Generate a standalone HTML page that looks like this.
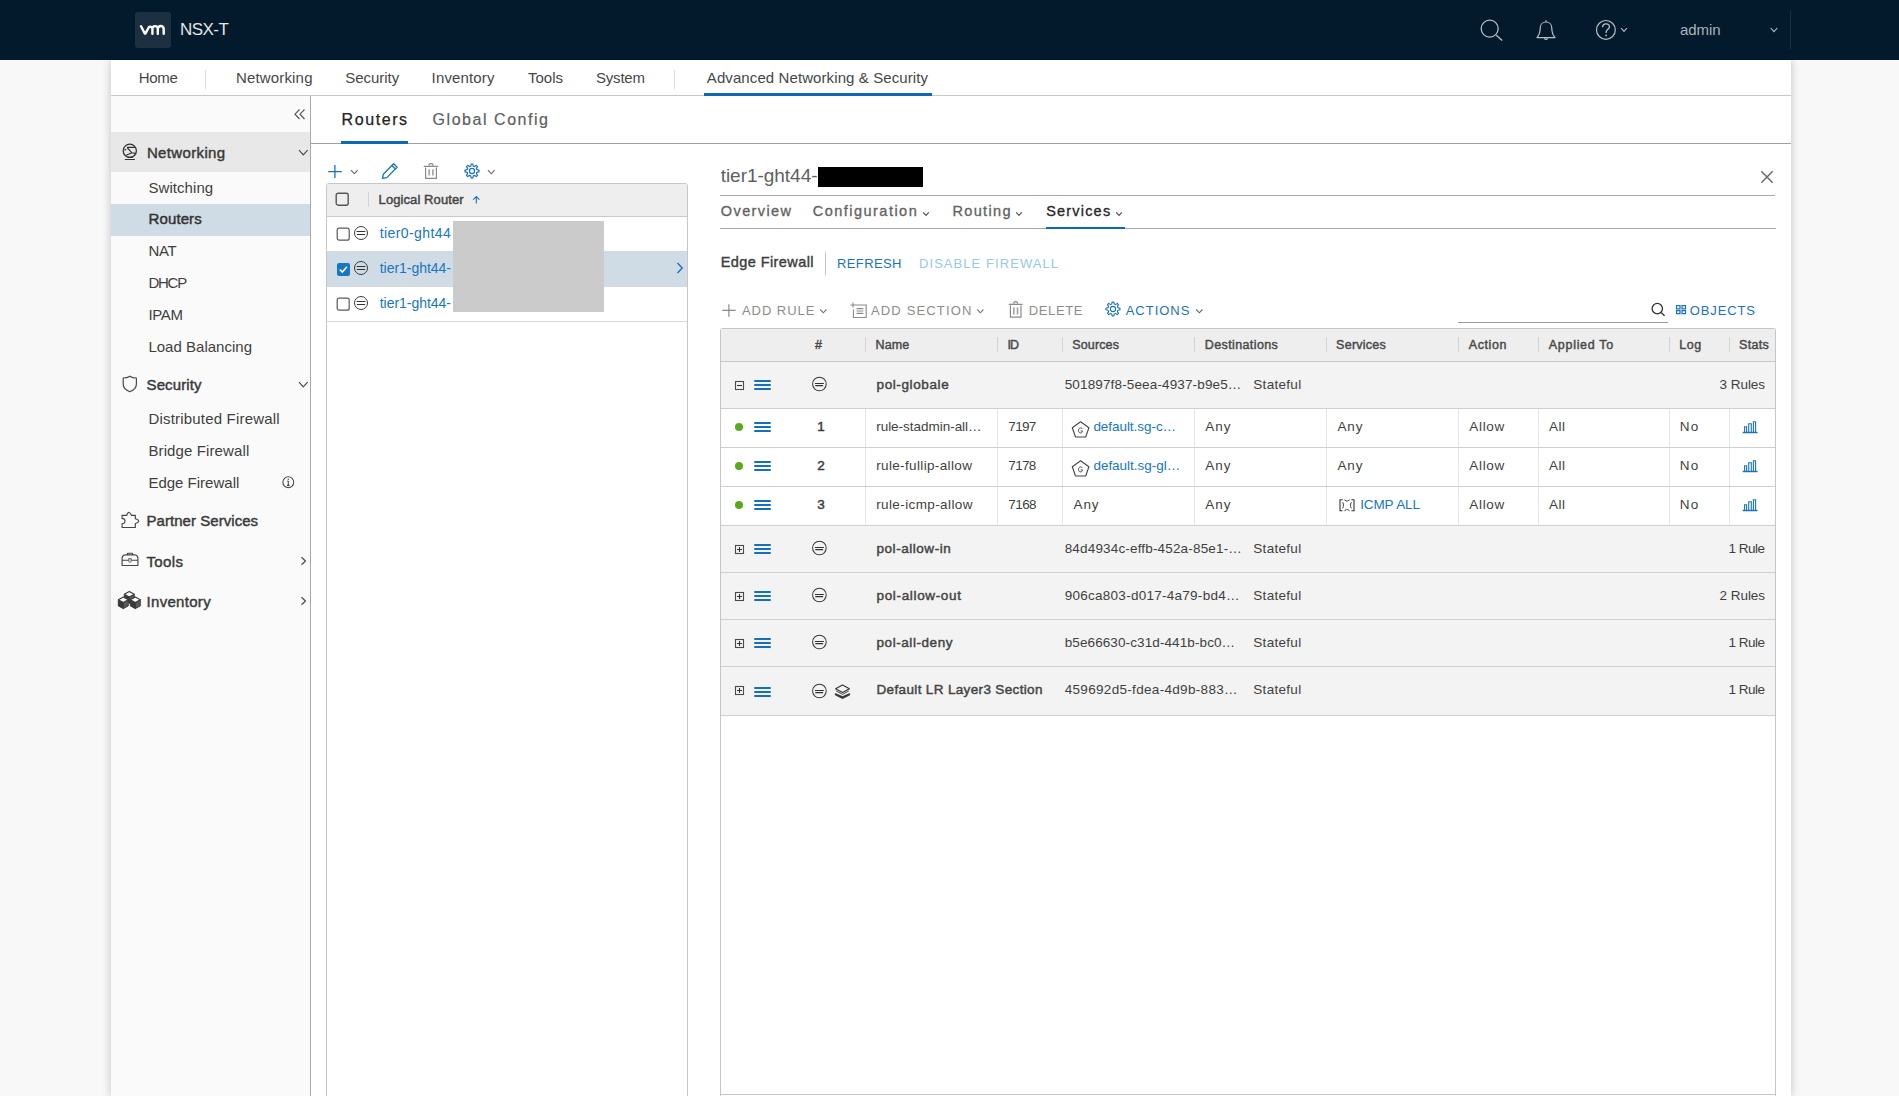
<!DOCTYPE html>
<html><head><meta charset="utf-8"><title>NSX-T</title>
<style>
html,body{margin:0;padding:0;width:1899px;height:1096px;overflow:hidden;background:#f8f8f8;font-family:"Liberation Sans",sans-serif;}
.t{position:absolute;white-space:nowrap;}
svg{overflow:visible;}
</style></head><body>
<div style="position:absolute;left:0px;top:60px;width:1899px;height:1036px;background:#f8f8f8;"></div>
<div style="position:absolute;left:111px;top:60px;width:1680px;height:1036px;background:#fff;box-shadow:0 0 9px rgba(0,0,0,0.22);"></div>
<div style="position:absolute;left:0px;top:0px;width:1899px;height:60px;background:#021a2b;"></div>
<div style="position:absolute;left:135px;top:12px;width:36px;height:36px;background:#1d3041;border-radius:3px;"></div>
<svg style="position:absolute;left:135px;top:12px;" width="36" height="36" viewBox="0 0 36 36" fill="none"><path d="M6 14.3 L9.7 21.3 Q10.1 22 10.5 21.3 L13.7 15.5 A2.1 2.1 0 0 1 17.4 16.6 V21.8 M17.4 16.8 A2.7 2.7 0 0 1 22.8 16.8 V21.8 M22.8 16.9 A2.95 2.95 0 0 1 28.7 16.9 V21.8" stroke="#fff" stroke-width="2.4" stroke-linecap="round" stroke-linejoin="round"/></svg>
<div class="t" style="left:179.90px;top:20.90px;font-size:17px;line-height:17px;font-weight:400;color:#e6e6e6;letter-spacing:-0.525px;">NSX-T</div>
<svg style="position:absolute;left:1478px;top:17px;" width="28" height="28" viewBox="0 0 28 28" fill="none"><circle cx="11.7" cy="11.6" r="8.5" stroke="#b9bfc5" stroke-width="1.3"/><line x1="18.2" y1="18.3" x2="24.2" y2="23.6" stroke="#b9bfc5" stroke-width="1.4"/></svg>
<svg style="position:absolute;left:1534px;top:17px;" width="24" height="26" viewBox="0 0 24 26" fill="none"><path d="M12 3.3 V4.8 M5 17.5 C5.6 16 6.3 14 6.3 10.6 C6.3 7.3 8.8 5 12 5 C15.2 5 17.7 7.3 17.7 10.6 C17.7 14 18.4 16 19 17.5 L21 20.6 H3 Z" stroke="#b9bfc5" stroke-width="1.2" stroke-linejoin="round"/><path d="M10.3 21.3 Q12 23.5 13.7 21.3" stroke="#b9bfc5" stroke-width="1.2"/></svg>
<svg style="position:absolute;left:1594px;top:18px;" width="36" height="24" viewBox="0 0 36 24" fill="none"><circle cx="11.9" cy="11.9" r="9.4" stroke="#b9bfc5" stroke-width="1.2"/><path d="M8.6 9.2 C8.6 7 10.1 5.9 12 5.9 C14 5.9 15.4 7.1 15.4 8.9 C15.4 11.2 12.1 11.4 12.1 14.2 V15" stroke="#b9bfc5" stroke-width="1.3"/><rect x="11.3" y="16.6" width="1.6" height="1.6" fill="#b9bfc5"/><path d="M27 10 L30 13.4 L33 10" stroke="#b9bfc5" stroke-width="1.1"/></svg>
<div class="t" style="left:1680.00px;top:21.70px;font-size:15px;line-height:15px;font-weight:400;color:#adb3b9;letter-spacing:-0.088px;">admin</div>
<svg style="position:absolute;left:1766px;top:24px;" width="16" height="12" viewBox="0 0 16 12" fill="none"><path d="M4.7 4 L8 7.6 L11.3 4" stroke="#b9bfc5" stroke-width="1.1"/></svg>
<div style="position:absolute;left:1790px;top:10px;width:1px;height:39px;background:#1e3040;"></div>
<div style="position:absolute;left:111px;top:95px;width:1680px;height:1px;background:#c8c8c8;"></div>
<div class="t" style="left:138.70px;top:70.20px;font-size:15px;line-height:15px;font-weight:400;color:#474747;letter-spacing:-0.267px;">Home</div>
<div class="t" style="left:235.90px;top:70.20px;font-size:15px;line-height:15px;font-weight:400;color:#474747;letter-spacing:0.172px;">Networking</div>
<div class="t" style="left:345.20px;top:70.20px;font-size:15px;line-height:15px;font-weight:400;color:#474747;letter-spacing:-0.014px;">Security</div>
<div class="t" style="left:431.60px;top:70.20px;font-size:15px;line-height:15px;font-weight:400;color:#474747;letter-spacing:0.150px;">Inventory</div>
<div class="t" style="left:528.00px;top:70.20px;font-size:15px;line-height:15px;font-weight:400;color:#474747;letter-spacing:0.000px;">Tools</div>
<div class="t" style="left:596.00px;top:70.20px;font-size:15px;line-height:15px;font-weight:400;color:#474747;letter-spacing:-0.200px;">System</div>
<div class="t" style="left:706.80px;top:70.20px;font-size:15px;line-height:15px;font-weight:400;color:#474747;letter-spacing:0.095px;">Advanced Networking &amp; Security</div>
<div style="position:absolute;left:205px;top:70px;width:1px;height:19px;background:#dddddd;"></div>
<div style="position:absolute;left:674px;top:70px;width:1px;height:19px;background:#dddddd;"></div>
<div style="position:absolute;left:704px;top:93px;width:228px;height:3px;background:#0e68b5;"></div>
<div style="position:absolute;left:111px;top:96px;width:199px;height:1000px;background:#fafafa;"></div>
<div style="position:absolute;left:310px;top:96px;width:1px;height:1000px;background:#a9a9a9;"></div>
<svg style="position:absolute;left:292px;top:107px;" width="16" height="15" viewBox="0 0 16 15" fill="none"><path d="M7.5 2.5 L3 7.2 L7.5 12 M12.5 2.5 L8 7.2 L12.5 12" stroke="#565656" stroke-width="1.2"/></svg>
<div style="position:absolute;left:111px;top:132px;width:199px;height:40px;background:#e8e8e8;"></div>
<div style="position:absolute;left:111px;top:204px;width:199px;height:32px;background:#d0dce5;"></div>
<div class="t" style="left:146.92px;top:145.30px;font-size:15px;line-height:15px;font-weight:400;color:#3a3a3a;letter-spacing:0.356px;-webkit-text-stroke:0.45px #3a3a3a;">Networking</div>
<div class="t" style="left:148.40px;top:179.50px;font-size:15px;line-height:15px;font-weight:400;color:#3f3f3f;letter-spacing:0.075px;">Switching</div>
<div class="t" style="left:148.62px;top:211.00px;font-size:15px;line-height:15px;font-weight:400;color:#333;letter-spacing:0.092px;-webkit-text-stroke:0.45px #333;">Routers</div>
<div class="t" style="left:148.40px;top:242.90px;font-size:15px;line-height:15px;font-weight:400;color:#3f3f3f;letter-spacing:-0.300px;">NAT</div>
<div class="t" style="left:148.40px;top:274.80px;font-size:15px;line-height:15px;font-weight:400;color:#3f3f3f;letter-spacing:-1.233px;">DHCP</div>
<div class="t" style="left:148.40px;top:306.80px;font-size:15px;line-height:15px;font-weight:400;color:#3f3f3f;letter-spacing:-0.317px;">IPAM</div>
<div class="t" style="left:148.40px;top:339.00px;font-size:15px;line-height:15px;font-weight:400;color:#3f3f3f;letter-spacing:0.015px;">Load Balancing</div>
<div class="t" style="left:146.53px;top:377.40px;font-size:15px;line-height:15px;font-weight:400;color:#3a3a3a;letter-spacing:0.121px;-webkit-text-stroke:0.45px #3a3a3a;">Security</div>
<div class="t" style="left:148.40px;top:411.00px;font-size:15px;line-height:15px;font-weight:400;color:#3f3f3f;letter-spacing:0.197px;">Distributed Firewall</div>
<div class="t" style="left:148.40px;top:443.00px;font-size:15px;line-height:15px;font-weight:400;color:#3f3f3f;letter-spacing:0.121px;">Bridge Firewall</div>
<div class="t" style="left:148.40px;top:475.40px;font-size:15px;line-height:15px;font-weight:400;color:#3f3f3f;letter-spacing:0.004px;">Edge Firewall</div>
<div class="t" style="left:146.53px;top:513.10px;font-size:15px;line-height:15px;font-weight:400;color:#3a3a3a;letter-spacing:0.047px;-webkit-text-stroke:0.45px #3a3a3a;">Partner Services</div>
<div class="t" style="left:146.53px;top:553.50px;font-size:15px;line-height:15px;font-weight:400;color:#3a3a3a;letter-spacing:0.337px;-webkit-text-stroke:0.45px #3a3a3a;">Tools</div>
<div class="t" style="left:146.53px;top:593.80px;font-size:15px;line-height:15px;font-weight:400;color:#3a3a3a;letter-spacing:0.306px;-webkit-text-stroke:0.45px #3a3a3a;">Inventory</div>
<svg style="position:absolute;left:298px;top:148.5px;" width="11" height="8" viewBox="0 0 11 8" fill="none"><path d="M1 1.2 L5.3 5.8 L9.6 1.2" stroke="#4a4a4a" stroke-width="1.2"/></svg>
<svg style="position:absolute;left:298px;top:380.5px;" width="11" height="8" viewBox="0 0 11 8" fill="none"><path d="M1 1.2 L5.3 5.8 L9.6 1.2" stroke="#4a4a4a" stroke-width="1.2"/></svg>
<svg style="position:absolute;left:299.5px;top:555.5px;" width="8" height="11" viewBox="0 0 8 11" fill="none"><path d="M1.5 1.2 L5.5 5 L1.5 8.8" stroke="#4a4a4a" stroke-width="1.2"/></svg>
<svg style="position:absolute;left:299.5px;top:595.5px;" width="8" height="11" viewBox="0 0 8 11" fill="none"><path d="M1.5 1.2 L5.5 5 L1.5 8.8" stroke="#4a4a4a" stroke-width="1.2"/></svg>
<svg style="position:absolute;left:121px;top:143px;" width="18" height="18" viewBox="0 0 18 18" fill="none"><circle cx="8.8" cy="7.8" r="6.6" stroke="#333" stroke-width="1.3"/><path d="M6 4.4 H14 M6.1 4.5 L10.9 9.8 L14.5 10.4 M10.9 9.8 L5 12.2 M6.6 14.3 H11.8 M3.8 16.5 H13.9 M3.4 7.2 L5.2 6.4" stroke="#333" stroke-width="1.2"/></svg>
<svg style="position:absolute;left:121px;top:375px;" width="18" height="18" viewBox="0 0 18 18" fill="none"><path d="M8.8 1.2 C6.5 2.8 4.2 3 2.2 3 V9 C2.2 12.6 5 15.3 8.8 16.8 C12.6 15.3 15.4 12.6 15.4 9 V3 C13.4 3 11.1 2.8 8.8 1.2 Z" stroke="#4a4a4a" stroke-width="1.2" stroke-linejoin="round"/></svg>
<svg style="position:absolute;left:120px;top:512px;" width="20" height="18" viewBox="0 0 20 18" fill="none"><path d="M2.1 3.3 H6.8 Q7.2 0.9 8.8 0.3 Q10.6 0.8 11.4 3.3 H15.3 V6.8 Q18.4 7.4 18.8 9.2 Q18.3 11 15.3 11.5 V15.5 H2.1 V11.5 H3.4 Q5 11 5 9.1 Q5 7.1 3.4 6.6 H2.1 Z" stroke="#444" stroke-width="1.15" stroke-linejoin="round"/></svg>
<svg style="position:absolute;left:120px;top:551px;" width="20" height="16" viewBox="0 0 20 16" fill="none"><path d="M2.1 14.5 V7.3 Q2.1 4.4 5.2 3.8 H14.8 Q17.9 4.4 17.9 7.3 V14.5 Z M7.4 3.7 V2.8 Q7.4 2.2 8 2.2 H12 Q12.6 2.2 12.6 2.8 V3.7 M2.1 9.2 H8.6 M11.4 9.2 H17.9" stroke="#444" stroke-width="1.15" stroke-linejoin="round"/><path d="M8.7 7.6 H11.3 V10.2 L10 11.6 L8.7 10.2 Z" stroke="#555" stroke-width="0.9" fill="#ddd"/></svg>
<svg style="position:absolute;left:117px;top:590px;" width="25" height="20" viewBox="0 0 25 20" fill="none"><path d="M7.332 4.300000000000001 L12.3 7.0 L12.3 13.2 L7.332 10.5 Z" fill="#3a3a3a" stroke="#3a3a3a" stroke-width="1" stroke-linejoin="round"/><path d="M12.3 7.0 L17.268 4.300000000000001 L17.268 10.5 L12.3 13.2 Z" fill="#5a5a5a" stroke="#3a3a3a" stroke-width="1" stroke-linejoin="round"/><path d="M12.3 1.6 L17.268 4.300000000000001 L12.3 7.0 L7.332 4.300000000000001 Z" fill="#fafafa" stroke="#3a3a3a" stroke-width="1.1" stroke-linejoin="round"/><path d="M1.331999999999999 9.7 L6.3 12.4 L6.3 18.6 L1.331999999999999 15.899999999999999 Z" fill="#3a3a3a" stroke="#3a3a3a" stroke-width="1" stroke-linejoin="round"/><path d="M6.3 12.4 L11.268 9.7 L11.268 15.899999999999999 L6.3 18.6 Z" fill="#5a5a5a" stroke="#3a3a3a" stroke-width="1" stroke-linejoin="round"/><path d="M6.3 7 L11.268 9.7 L6.3 12.4 L1.331999999999999 9.7 Z" fill="#fafafa" stroke="#3a3a3a" stroke-width="1.1" stroke-linejoin="round"/><path d="M13.332 9.7 L18.3 12.4 L18.3 18.6 L13.332 15.899999999999999 Z" fill="#3a3a3a" stroke="#3a3a3a" stroke-width="1" stroke-linejoin="round"/><path d="M18.3 12.4 L23.268 9.7 L23.268 15.899999999999999 L18.3 18.6 Z" fill="#5a5a5a" stroke="#3a3a3a" stroke-width="1" stroke-linejoin="round"/><path d="M18.3 7 L23.268 9.7 L18.3 12.4 L13.332 9.7 Z" fill="#fafafa" stroke="#3a3a3a" stroke-width="1.1" stroke-linejoin="round"/></svg>
<svg style="position:absolute;left:281.6px;top:476.2px;" width="13" height="13" viewBox="0 0 13 13" fill="none"><circle cx="6.3" cy="6.2" r="5.4" stroke="#4a4a4a" stroke-width="1.1"/><path d="M6.3 5 V9.4 M5 9.4 H7.6 M5.2 5 H6.3" stroke="#4a4a4a" stroke-width="1.1"/><rect x="5.7" y="2.7" width="1.2" height="1.2" fill="#4a4a4a"/></svg>
<div class="t" style="left:341.62px;top:111.50px;font-size:16px;line-height:16px;font-weight:400;color:#222;letter-spacing:1.575px;-webkit-text-stroke:0.25px #222;">Routers</div>
<div class="t" style="left:432.60px;top:111.50px;font-size:16px;line-height:16px;font-weight:400;color:#5e5e5e;letter-spacing:1.538px;-webkit-text-stroke:0.2px #5e5e5e;">Global Config</div>
<div style="position:absolute;left:311px;top:143px;width:1480px;height:1px;background:#a0a0a0;"></div>
<div style="position:absolute;left:341px;top:141px;width:67px;height:3px;background:#0e68b5;"></div>
<svg style="position:absolute;left:326px;top:163px;" width="18" height="18" viewBox="0 0 18 18" fill="none"><path d="M8.9 2 V15 M2.2 8.6 H15.8" stroke="#1a73ba" stroke-width="1.3"/></svg>
<svg style="position:absolute;left:349px;top:168px;" width="11" height="9" viewBox="0 0 11 9" fill="none"><path d="M2 2.2 L5.3 5.8 L8.6 2.2" stroke="#666" stroke-width="1.1"/></svg>
<svg style="position:absolute;left:380px;top:161px;" width="20" height="20" viewBox="0 0 20 20" fill="none"><path d="M2.5 17.4 L3.3 13.2 L13.6 2.8 L17.1 6.3 L6.8 16.6 Z M11.9 4.5 L15.4 8" stroke="#1a73ba" stroke-width="1.3" stroke-linejoin="round"/></svg>
<svg style="position:absolute;left:423px;top:162px;" width="16" height="18" viewBox="0 0 16 18" fill="none"><path d="M0.8 4.3 H15.2 M6 3.4 Q6 1.6 8 1.6 Q10 1.6 10 3.4 M2.6 5.6 V16.4 H13.4 V5.6" stroke="#8a8a8a" stroke-width="1.2"/><path d="M6.1 7.2 V13.6 M9.9 7.2 V13.6" stroke="#9a9a9a" stroke-width="1.5"/></svg>
<svg style="position:absolute;left:462.5px;top:163px;" width="18" height="17" viewBox="0 0 18 17" fill="none"><path d="M8.2 1 L9.8 1 L10.3 3.1 L11.5 3.6 L13.3 2.4 L14.5 3.6 L13.4 5.4 L13.9 6.6 L16 7.2 L16 8.8 L13.9 9.3 L13.4 10.6 L14.5 12.4 L13.3 13.6 L11.5 12.4 L10.3 12.9 L9.8 15 L8.2 15 L7.7 12.9 L6.5 12.4 L4.7 13.6 L3.5 12.4 L4.6 10.6 L4.1 9.3 L2 8.8 L2 7.2 L4.1 6.6 L4.6 5.4 L3.5 3.6 L4.7 2.4 L6.5 3.6 L7.7 3.1 Z" stroke="#1a73ba" stroke-width="1.2" stroke-linejoin="round"/><circle cx="9" cy="8" r="2.6" stroke="#1a73ba" stroke-width="1.2"/></svg>
<svg style="position:absolute;left:486px;top:168px;" width="11" height="9" viewBox="0 0 11 9" fill="none"><path d="M2 2.2 L5.3 5.8 L8.6 2.2" stroke="#666" stroke-width="1.1"/></svg>
<div style="position:absolute;left:326px;top:183px;width:362px;height:1000px;border:1px solid #c6c6c6;border-radius:3px;background:#fff;box-sizing:border-box;"></div>
<div style="position:absolute;left:327px;top:184px;width:360px;height:32px;background:#eeeeee;border-radius:2px 2px 0 0;"></div>
<div style="position:absolute;left:327px;top:216px;width:360px;height:1px;background:#c9c9c9;"></div>
<div style="position:absolute;left:327px;top:251px;width:360px;height:1px;background:#d8d8d8;"></div>
<div style="position:absolute;left:327px;top:252px;width:360px;height:34px;background:#d0dce5;"></div>
<div style="position:absolute;left:327px;top:286px;width:360px;height:1px;background:#d8d8d8;"></div>
<div style="position:absolute;left:327px;top:321px;width:360px;height:1px;background:#d8d8d8;"></div>
<svg style="position:absolute;left:335px;top:192px;" width="15" height="15" viewBox="0 0 15 15" fill="none"><rect x="1.2" y="1.2" width="12" height="12" rx="2" stroke="#565656" stroke-width="1.4"/></svg>
<div style="position:absolute;left:368px;top:192px;width:1px;height:15px;background:#d4d4d4;"></div>
<div class="t" style="left:378.62px;top:193.40px;font-size:13px;line-height:13px;font-weight:400;color:#454545;letter-spacing:0.085px;-webkit-text-stroke:0.45px #454545;">Logical Router</div>
<svg style="position:absolute;left:471px;top:195px;" width="11" height="10" viewBox="0 0 11 10" fill="none"><path d="M5.3 8.6 V1.6 M2.2 4.6 L5.3 1.5 L8.4 4.6" stroke="#1a73ba" stroke-width="1.1"/></svg>
<svg style="position:absolute;left:336px;top:227px;" width="15" height="15" viewBox="0 0 15 15" fill="none"><rect x="1.2" y="1.2" width="12" height="12" rx="2" stroke="#5a5a5a" stroke-width="1.2" fill="#fff"/></svg>
<svg style="position:absolute;left:354px;top:226px;" width="15" height="15" viewBox="0 0 15 15" fill="none"><circle cx="7" cy="7" r="6.5" stroke="#3a3a3a" stroke-width="1"/><path d="M2.6 5.5 H11.4 M2.9 8.5 H11.1" stroke="#333" stroke-width="1.1"/></svg>
<div class="t" style="left:379.70px;top:225.90px;font-size:14px;line-height:14px;font-weight:400;color:#1676bf;letter-spacing:0.415px;">tier0-ght44</div>
<svg style="position:absolute;left:336px;top:262px;" width="15" height="15" viewBox="0 0 15 15" fill="none"><rect x="1" y="1" width="13" height="13" rx="2" fill="#1676c6"/><path d="M3.8 7.5 L6.3 10 L11 4.8" stroke="#fff" stroke-width="1.6"/></svg>
<svg style="position:absolute;left:354px;top:261px;" width="15" height="15" viewBox="0 0 15 15" fill="none"><circle cx="7" cy="7" r="6.5" stroke="#3a3a3a" stroke-width="1"/><path d="M2.6 5.5 H11.4 M2.9 8.5 H11.1" stroke="#333" stroke-width="1.1"/></svg>
<div class="t" style="left:379.70px;top:261.10px;font-size:14px;line-height:14px;font-weight:400;color:#1676bf;letter-spacing:-0.027px;">tier1-ght44-</div>
<svg style="position:absolute;left:336px;top:297px;" width="15" height="15" viewBox="0 0 15 15" fill="none"><rect x="1.2" y="1.2" width="12" height="12" rx="2" stroke="#5a5a5a" stroke-width="1.2" fill="#fff"/></svg>
<svg style="position:absolute;left:354px;top:296px;" width="15" height="15" viewBox="0 0 15 15" fill="none"><circle cx="7" cy="7" r="6.5" stroke="#3a3a3a" stroke-width="1"/><path d="M2.6 5.5 H11.4 M2.9 8.5 H11.1" stroke="#333" stroke-width="1.1"/></svg>
<div class="t" style="left:379.70px;top:296.00px;font-size:14px;line-height:14px;font-weight:400;color:#1676bf;letter-spacing:-0.027px;">tier1-ght44-</div>
<div style="position:absolute;left:452.5px;top:221px;width:151px;height:91px;background:#cbcbcb;"></div>
<svg style="position:absolute;left:675px;top:261px;" width="10" height="14" viewBox="0 0 10 14" fill="none"><path d="M2.5 2 L7.2 7 L2.5 12" stroke="#1a73ba" stroke-width="1.4"/></svg>
<div class="t" style="left:720.70px;top:165.90px;font-size:19px;line-height:19px;font-weight:400;color:#606060;letter-spacing:-0.032px;">tier1-ght44-</div>
<div style="position:absolute;left:818px;top:167px;width:105px;height:20px;background:#000;"></div>
<svg style="position:absolute;left:1759px;top:169px;" width="16" height="16" viewBox="0 0 16 16" fill="none"><path d="M2.3 2.3 L13.7 13.7 M13.7 2.3 L2.3 13.7" stroke="#6b6b6b" stroke-width="1.5"/></svg>
<div style="position:absolute;left:720px;top:195px;width:1055px;height:1px;background:#a8a8a8;"></div>
<div class="t" style="left:720.86px;top:203.90px;font-size:14.5px;line-height:15px;font-weight:400;color:#626262;letter-spacing:1.383px;-webkit-text-stroke:0.32px #626262;">Overview</div>
<div class="t" style="left:812.76px;top:203.90px;font-size:14.5px;line-height:15px;font-weight:400;color:#626262;letter-spacing:1.477px;-webkit-text-stroke:0.32px #626262;">Configuration</div>
<div class="t" style="left:952.46px;top:203.90px;font-size:14.5px;line-height:15px;font-weight:400;color:#626262;letter-spacing:1.347px;-webkit-text-stroke:0.32px #626262;">Routing</div>
<div class="t" style="left:1046.16px;top:203.90px;font-size:14.5px;line-height:15px;font-weight:400;color:#262626;letter-spacing:1.197px;-webkit-text-stroke:0.32px #262626;">Services</div>
<svg style="position:absolute;left:921.5px;top:210.5px;" width="8" height="6" viewBox="0 0 8 6" fill="none"><path d="M1.2 1.4 L4 4.4 L6.8 1.4" stroke="#555" stroke-width="1.25"/></svg>
<svg style="position:absolute;left:1015.3px;top:210.5px;" width="8" height="6" viewBox="0 0 8 6" fill="none"><path d="M1.2 1.4 L4 4.4 L6.8 1.4" stroke="#555" stroke-width="1.25"/></svg>
<svg style="position:absolute;left:1114.8px;top:210.5px;" width="8" height="6" viewBox="0 0 8 6" fill="none"><path d="M1.2 1.4 L4 4.4 L6.8 1.4" stroke="#555" stroke-width="1.25"/></svg>
<div style="position:absolute;left:720px;top:228px;width:1056px;height:1px;background:#a8a8a8;"></div>
<div style="position:absolute;left:1046px;top:226.5px;width:79px;height:2.5px;background:#0e68b5;"></div>
<div class="t" style="left:720.70px;top:255.10px;font-size:14.5px;line-height:15px;font-weight:400;color:#3d3d3d;letter-spacing:0.421px;-webkit-text-stroke:0.4px #3d3d3d;">Edge Firewall</div>
<div style="position:absolute;left:824.5px;top:252px;width:1.5px;height:23px;background:#c4c4c4;"></div>
<div class="t" style="left:837.00px;top:257.00px;font-size:13px;line-height:13px;font-weight:400;color:#1a73ba;letter-spacing:0.383px;">REFRESH</div>
<div class="t" style="left:919.00px;top:257.00px;font-size:13px;line-height:13px;font-weight:400;color:#98c8e6;letter-spacing:1.063px;">DISABLE FIREWALL</div>
<svg style="position:absolute;left:720px;top:302px;" width="18" height="17" viewBox="0 0 18 17" fill="none"><path d="M8.9 2.2 V14.8 M2.2 8.4 H15.7" stroke="#8a8a8a" stroke-width="1.2"/></svg>
<div class="t" style="left:741.90px;top:304.00px;font-size:13px;line-height:13px;font-weight:400;color:#8c8c8c;letter-spacing:0.979px;">ADD RULE</div>
<svg style="position:absolute;left:819px;top:308px;" width="9" height="7" viewBox="0 0 9 7" fill="none"><path d="M1.2 1.5 L4.3 4.8 L7.4 1.5" stroke="#777" stroke-width="1.1"/></svg>
<svg style="position:absolute;left:850px;top:301px;" width="18" height="18" viewBox="0 0 18 18" fill="none"><path d="M3 1.5 V6.5 M0.5 4 H5.5 M5.5 4 H16.2 V16.5 H3.4 V8.5 M6.5 7.6 H13.4 M6.5 10 H13.4 M6.5 12.4 H13.4" stroke="#8a8a8a" stroke-width="1.1"/></svg>
<div class="t" style="left:871.00px;top:304.00px;font-size:13px;line-height:13px;font-weight:400;color:#8c8c8c;letter-spacing:1.145px;">ADD SECTION</div>
<svg style="position:absolute;left:975.5px;top:308px;" width="9" height="7" viewBox="0 0 9 7" fill="none"><path d="M1.2 1.5 L4.3 4.8 L7.4 1.5" stroke="#777" stroke-width="1.1"/></svg>
<svg style="position:absolute;left:1008px;top:300px;" width="16" height="19" viewBox="0 0 16 19" fill="none"><path d="M0.8 4.3 H14.6 M5.7 3.4 Q5.7 1.6 7.7 1.6 Q9.7 1.6 9.7 3.4 M2.4 5.6 V17.2 H13 V5.6" stroke="#8a8a8a" stroke-width="1.2"/><path d="M5.9 7.4 V14.4 M9.5 7.4 V14.4" stroke="#9a9a9a" stroke-width="1.5"/></svg>
<div class="t" style="left:1028.70px;top:303.90px;font-size:13px;line-height:13px;font-weight:400;color:#8c8c8c;letter-spacing:0.650px;">DELETE</div>
<svg style="position:absolute;left:1104px;top:301px;" width="17" height="17" viewBox="0 0 17 17" fill="none"><path d="M8.2 1 L9.8 1 L10.3 3.1 L11.5 3.6 L13.3 2.4 L14.5 3.6 L13.4 5.4 L13.9 6.6 L16 7.2 L16 8.8 L13.9 9.3 L13.4 10.6 L14.5 12.4 L13.3 13.6 L11.5 12.4 L10.3 12.9 L9.8 15 L8.2 15 L7.7 12.9 L6.5 12.4 L4.7 13.6 L3.5 12.4 L4.6 10.6 L4.1 9.3 L2 8.8 L2 7.2 L4.1 6.6 L4.6 5.4 L3.5 3.6 L4.7 2.4 L6.5 3.6 L7.7 3.1 Z" stroke="#1a73ba" stroke-width="1.1" stroke-linejoin="round"/><circle cx="9" cy="8" r="2.6" stroke="#1a73ba" stroke-width="1.1"/></svg>
<div class="t" style="left:1125.70px;top:303.90px;font-size:13px;line-height:13px;font-weight:400;color:#1a73ba;letter-spacing:0.983px;">ACTIONS</div>
<svg style="position:absolute;left:1194.5px;top:308px;" width="9" height="7" viewBox="0 0 9 7" fill="none"><path d="M1.2 1.5 L4.3 4.8 L7.4 1.5" stroke="#666" stroke-width="1.1"/></svg>
<div style="position:absolute;left:1457.5px;top:322px;width:210px;height:1px;background:#9a9a9a;"></div>
<svg style="position:absolute;left:1650px;top:301px;" width="17" height="17" viewBox="0 0 17 17" fill="none"><circle cx="7.3" cy="7.6" r="5.2" stroke="#333" stroke-width="1.3"/><path d="M11 11.4 L14.6 14.8" stroke="#333" stroke-width="1.4"/></svg>
<svg style="position:absolute;left:1675px;top:304px;" width="12" height="11" viewBox="0 0 12 11" fill="none"><path d="M1.5 1.6 H5 V4.8 H1.5 Z M7 1.6 H10.5 V4.8 H7 Z M1.5 6.6 H5 V9.6 H1.5 Z M7 6.6 H10.5 V9.6 H7 Z" stroke="#1a73ba" stroke-width="1.2" stroke-linejoin="miter"/></svg>
<div class="t" style="left:1689.70px;top:303.90px;font-size:13px;line-height:13px;font-weight:400;color:#1a73ba;letter-spacing:0.892px;">OBJECTS</div>
<div style="position:absolute;left:720px;top:328px;width:1056px;height:768px;border:1px solid #c6c6c6;border-bottom:none;border-radius:3px 3px 0 0;box-sizing:border-box;background:#fff;"></div>
<div style="position:absolute;left:721px;top:1094px;width:1054px;height:1px;background:#c6c6c6;"></div>
<div style="position:absolute;left:721px;top:329px;width:1054px;height:32px;background:#eeeeee;"></div>
<div style="position:absolute;left:721px;top:361px;width:1054px;height:1px;background:#c9c9c9;"></div>
<div style="position:absolute;left:865px;top:337px;width:1px;height:15px;background:#d4d4d4;"></div>
<div style="position:absolute;left:997px;top:337px;width:1px;height:15px;background:#d4d4d4;"></div>
<div style="position:absolute;left:1062px;top:337px;width:1px;height:15px;background:#d4d4d4;"></div>
<div style="position:absolute;left:1194px;top:337px;width:1px;height:15px;background:#d4d4d4;"></div>
<div style="position:absolute;left:1326px;top:337px;width:1px;height:15px;background:#d4d4d4;"></div>
<div style="position:absolute;left:1458px;top:337px;width:1px;height:15px;background:#d4d4d4;"></div>
<div style="position:absolute;left:1538px;top:337px;width:1px;height:15px;background:#d4d4d4;"></div>
<div style="position:absolute;left:1669px;top:337px;width:1px;height:15px;background:#d4d4d4;"></div>
<div style="position:absolute;left:1729px;top:337px;width:1px;height:15px;background:#d4d4d4;"></div>
<div class="t" style="left:815.02px;top:338.50px;font-size:12.5px;line-height:13px;font-weight:400;color:#4a4a4a;letter-spacing:0.000px;-webkit-text-stroke:0.45px #4a4a4a;">#</div>
<div class="t" style="left:875.62px;top:338.50px;font-size:12.5px;line-height:13px;font-weight:400;color:#4a4a4a;letter-spacing:0.100px;-webkit-text-stroke:0.45px #4a4a4a;">Name</div>
<div class="t" style="left:1007.62px;top:338.50px;font-size:12.5px;line-height:13px;font-weight:400;color:#4a4a4a;letter-spacing:-1.050px;-webkit-text-stroke:0.45px #4a4a4a;">ID</div>
<div class="t" style="left:1072.22px;top:338.50px;font-size:12.5px;line-height:13px;font-weight:400;color:#4a4a4a;letter-spacing:0.150px;-webkit-text-stroke:0.45px #4a4a4a;">Sources</div>
<div class="t" style="left:1204.72px;top:338.50px;font-size:12.5px;line-height:13px;font-weight:400;color:#4a4a4a;letter-spacing:0.395px;-webkit-text-stroke:0.45px #4a4a4a;">Destinations</div>
<div class="t" style="left:1336.12px;top:338.50px;font-size:12.5px;line-height:13px;font-weight:400;color:#4a4a4a;letter-spacing:0.243px;-webkit-text-stroke:0.45px #4a4a4a;">Services</div>
<div class="t" style="left:1468.82px;top:338.50px;font-size:12.5px;line-height:13px;font-weight:400;color:#4a4a4a;letter-spacing:0.560px;-webkit-text-stroke:0.45px #4a4a4a;">Action</div>
<div class="t" style="left:1548.82px;top:338.50px;font-size:12.5px;line-height:13px;font-weight:400;color:#4a4a4a;letter-spacing:0.700px;-webkit-text-stroke:0.45px #4a4a4a;">Applied To</div>
<div class="t" style="left:1679.22px;top:338.50px;font-size:12.5px;line-height:13px;font-weight:400;color:#4a4a4a;letter-spacing:0.600px;-webkit-text-stroke:0.45px #4a4a4a;">Log</div>
<div class="t" style="left:1739.02px;top:338.50px;font-size:12.5px;line-height:13px;font-weight:400;color:#4a4a4a;letter-spacing:0.313px;-webkit-text-stroke:0.45px #4a4a4a;">Stats</div>
<div style="position:absolute;left:721px;top:362px;width:1054px;height:46px;background:#f3f3f3;"></div>
<div style="position:absolute;left:721px;top:408px;width:1054px;height:1px;background:#cfcfcf;"></div>
<svg style="position:absolute;left:735px;top:381.0px;" width="10" height="10" viewBox="0 0 10 10" fill="none"><rect x="0.5" y="0.5" width="8" height="8" stroke="#4a4a4a" stroke-width="1.1"/><path d="M2 4.5 H7" stroke="#333" stroke-width="1.1"/></svg>
<svg style="position:absolute;left:754px;top:380.0px;" width="18" height="10" viewBox="0 0 18 10" fill="none"><rect x="0" y="0" width="17" height="2" rx="1" fill="#1470b8"/><rect x="0" y="4" width="17" height="2" rx="1" fill="#1470b8"/><rect x="0" y="8" width="17" height="2" rx="1" fill="#1470b8"/></svg>
<svg style="position:absolute;left:812px;top:377px;" width="16" height="15" viewBox="0 0 16 15" fill="none"><circle cx="7.4" cy="7" r="6.8" stroke="#3a3a3a" stroke-width="1.05"/><path d="M2.9 6.5 H11.9 M3.3 8.6 H11.1" stroke="#333" stroke-width="1.1"/></svg>
<div class="t" style="left:876.52px;top:378.10px;font-size:13.5px;line-height:14px;font-weight:400;color:#444;letter-spacing:0.610px;-webkit-text-stroke:0.45px #444;">pol-globale</div>
<div class="t" style="left:1064.70px;top:378.10px;font-size:13.5px;line-height:14px;font-weight:400;color:#3f3f3f;letter-spacing:0.143px;">501897f8-5eea-4937-b9e5…</div>
<div class="t" style="left:1253.30px;top:378.10px;font-size:13.5px;line-height:14px;font-weight:400;color:#3f3f3f;letter-spacing:0.300px;">Stateful</div>
<div class="t" style="left:1719.60px;top:378.10px;font-size:13.5px;line-height:14px;font-weight:400;color:#3f3f3f;letter-spacing:-0.058px;">3 Rules</div>
<div style="position:absolute;left:721px;top:409px;width:1054px;height:38px;background:#fff;"></div>
<div style="position:absolute;left:721px;top:447px;width:1054px;height:1px;background:#cfcfcf;"></div>
<div style="position:absolute;left:865px;top:409px;width:1px;height:38px;background:#e3e6e9;"></div>
<div style="position:absolute;left:997px;top:409px;width:1px;height:38px;background:#e3e6e9;"></div>
<div style="position:absolute;left:1062px;top:409px;width:1px;height:38px;background:#e3e6e9;"></div>
<div style="position:absolute;left:1194px;top:409px;width:1px;height:38px;background:#e3e6e9;"></div>
<div style="position:absolute;left:1326px;top:409px;width:1px;height:38px;background:#e3e6e9;"></div>
<div style="position:absolute;left:1458px;top:409px;width:1px;height:38px;background:#e3e6e9;"></div>
<div style="position:absolute;left:1538px;top:409px;width:1px;height:38px;background:#e3e6e9;"></div>
<div style="position:absolute;left:1669px;top:409px;width:1px;height:38px;background:#e3e6e9;"></div>
<div style="position:absolute;left:1729px;top:409px;width:1px;height:38px;background:#e3e6e9;"></div>
<div style="position:absolute;left:735.3px;top:423.0px;width:8px;height:8px;border-radius:50%;background:#58ab1c;"></div>
<svg style="position:absolute;left:754px;top:422px;" width="18" height="10" viewBox="0 0 18 10" fill="none"><rect x="0" y="0" width="17" height="2" rx="1" fill="#1470b8"/><rect x="0" y="4" width="17" height="2" rx="1" fill="#1470b8"/><rect x="0" y="8" width="17" height="2" rx="1" fill="#1470b8"/></svg>
<div class="t" style="left:817.23px;top:420.30px;font-size:13.5px;line-height:14px;font-weight:400;color:#3a3a3a;letter-spacing:0.000px;-webkit-text-stroke:0.45px #3a3a3a;">1</div>
<div class="t" style="left:876.20px;top:420.30px;font-size:13.5px;line-height:14px;font-weight:400;color:#3f3f3f;letter-spacing:-0.025px;">rule-stadmin-all…</div>
<div class="t" style="left:1008.30px;top:420.30px;font-size:13.5px;line-height:14px;font-weight:400;color:#3f3f3f;letter-spacing:-0.650px;">7197</div>
<svg style="position:absolute;left:1072px;top:420.5px;" width="18" height="18" viewBox="0 0 18 18" fill="none"><path d="M8.6 0.7 L16.9 6.7 L13.7 16 H3.5 L0.3 6.7 Z" stroke="#444" stroke-width="1.1" stroke-linejoin="round"/><path d="M10.4 7.9 C10 7.2 9.4 6.9 8.6 6.9 C7.3 6.9 6.5 7.9 6.5 9.4 C6.5 10.9 7.3 11.9 8.6 11.9 C9.6 11.9 10.4 11.3 10.4 9.9 H8.7" stroke="#444" stroke-width="1"/></svg>
<div class="t" style="left:1093.40px;top:420.30px;font-size:13.5px;line-height:14px;font-weight:400;color:#1676bf;letter-spacing:-0.050px;">default.sg-c…</div>
<div class="t" style="left:1205.20px;top:420.30px;font-size:13.5px;line-height:14px;font-weight:400;color:#3f3f3f;letter-spacing:1.025px;">Any</div>
<div class="t" style="left:1337.40px;top:420.30px;font-size:13.5px;line-height:14px;font-weight:400;color:#3f3f3f;letter-spacing:0.925px;">Any</div>
<div class="t" style="left:1469.30px;top:420.30px;font-size:13.5px;line-height:14px;font-weight:400;color:#3f3f3f;letter-spacing:0.675px;">Allow</div>
<div class="t" style="left:1549.00px;top:420.30px;font-size:13.5px;line-height:14px;font-weight:400;color:#3f3f3f;letter-spacing:0.500px;">All</div>
<div class="t" style="left:1679.80px;top:420.30px;font-size:13.5px;line-height:14px;font-weight:400;color:#3f3f3f;letter-spacing:1.150px;">No</div>
<svg style="position:absolute;left:1742px;top:420px;" width="16" height="14" viewBox="0 0 16 14" fill="none"><path d="M1.2 12.5 H15" stroke="#1a73ba" stroke-width="1.3" stroke-linecap="round"/><path d="M2.6 12.2 V6.7 H4.6 V12.2 M6.7 12.2 V3.8 H9.3 V12.2 M11.4 12.2 V1.8 H13.6 V12.2" stroke="#1a73ba" stroke-width="1.1"/></svg>
<div style="position:absolute;left:721px;top:448px;width:1054px;height:38px;background:#fff;"></div>
<div style="position:absolute;left:721px;top:486px;width:1054px;height:1px;background:#cfcfcf;"></div>
<div style="position:absolute;left:865px;top:448px;width:1px;height:38px;background:#e3e6e9;"></div>
<div style="position:absolute;left:997px;top:448px;width:1px;height:38px;background:#e3e6e9;"></div>
<div style="position:absolute;left:1062px;top:448px;width:1px;height:38px;background:#e3e6e9;"></div>
<div style="position:absolute;left:1194px;top:448px;width:1px;height:38px;background:#e3e6e9;"></div>
<div style="position:absolute;left:1326px;top:448px;width:1px;height:38px;background:#e3e6e9;"></div>
<div style="position:absolute;left:1458px;top:448px;width:1px;height:38px;background:#e3e6e9;"></div>
<div style="position:absolute;left:1538px;top:448px;width:1px;height:38px;background:#e3e6e9;"></div>
<div style="position:absolute;left:1669px;top:448px;width:1px;height:38px;background:#e3e6e9;"></div>
<div style="position:absolute;left:1729px;top:448px;width:1px;height:38px;background:#e3e6e9;"></div>
<div style="position:absolute;left:735.3px;top:462.0px;width:8px;height:8px;border-radius:50%;background:#58ab1c;"></div>
<svg style="position:absolute;left:754px;top:461px;" width="18" height="10" viewBox="0 0 18 10" fill="none"><rect x="0" y="0" width="17" height="2" rx="1" fill="#1470b8"/><rect x="0" y="4" width="17" height="2" rx="1" fill="#1470b8"/><rect x="0" y="8" width="17" height="2" rx="1" fill="#1470b8"/></svg>
<div class="t" style="left:817.23px;top:459.30px;font-size:13.5px;line-height:14px;font-weight:400;color:#3a3a3a;letter-spacing:0.000px;-webkit-text-stroke:0.45px #3a3a3a;">2</div>
<div class="t" style="left:876.20px;top:459.30px;font-size:13.5px;line-height:14px;font-weight:400;color:#3f3f3f;letter-spacing:0.356px;">rule-fullip-allow</div>
<div class="t" style="left:1008.30px;top:459.30px;font-size:13.5px;line-height:14px;font-weight:400;color:#3f3f3f;letter-spacing:-0.650px;">7178</div>
<svg style="position:absolute;left:1072px;top:459.5px;" width="18" height="18" viewBox="0 0 18 18" fill="none"><path d="M8.6 0.7 L16.9 6.7 L13.7 16 H3.5 L0.3 6.7 Z" stroke="#444" stroke-width="1.1" stroke-linejoin="round"/><path d="M10.4 7.9 C10 7.2 9.4 6.9 8.6 6.9 C7.3 6.9 6.5 7.9 6.5 9.4 C6.5 10.9 7.3 11.9 8.6 11.9 C9.6 11.9 10.4 11.3 10.4 9.9 H8.7" stroke="#444" stroke-width="1"/></svg>
<div class="t" style="left:1093.40px;top:459.30px;font-size:13.5px;line-height:14px;font-weight:400;color:#1676bf;letter-spacing:-0.012px;">default.sg-gl…</div>
<div class="t" style="left:1205.20px;top:459.30px;font-size:13.5px;line-height:14px;font-weight:400;color:#3f3f3f;letter-spacing:1.025px;">Any</div>
<div class="t" style="left:1337.40px;top:459.30px;font-size:13.5px;line-height:14px;font-weight:400;color:#3f3f3f;letter-spacing:0.925px;">Any</div>
<div class="t" style="left:1469.30px;top:459.30px;font-size:13.5px;line-height:14px;font-weight:400;color:#3f3f3f;letter-spacing:0.675px;">Allow</div>
<div class="t" style="left:1549.00px;top:459.30px;font-size:13.5px;line-height:14px;font-weight:400;color:#3f3f3f;letter-spacing:0.500px;">All</div>
<div class="t" style="left:1679.80px;top:459.30px;font-size:13.5px;line-height:14px;font-weight:400;color:#3f3f3f;letter-spacing:1.150px;">No</div>
<svg style="position:absolute;left:1742px;top:459px;" width="16" height="14" viewBox="0 0 16 14" fill="none"><path d="M1.2 12.5 H15" stroke="#1a73ba" stroke-width="1.3" stroke-linecap="round"/><path d="M2.6 12.2 V6.7 H4.6 V12.2 M6.7 12.2 V3.8 H9.3 V12.2 M11.4 12.2 V1.8 H13.6 V12.2" stroke="#1a73ba" stroke-width="1.1"/></svg>
<div style="position:absolute;left:721px;top:487px;width:1054px;height:38px;background:#fff;"></div>
<div style="position:absolute;left:721px;top:525px;width:1054px;height:1px;background:#cfcfcf;"></div>
<div style="position:absolute;left:865px;top:487px;width:1px;height:38px;background:#e3e6e9;"></div>
<div style="position:absolute;left:997px;top:487px;width:1px;height:38px;background:#e3e6e9;"></div>
<div style="position:absolute;left:1062px;top:487px;width:1px;height:38px;background:#e3e6e9;"></div>
<div style="position:absolute;left:1194px;top:487px;width:1px;height:38px;background:#e3e6e9;"></div>
<div style="position:absolute;left:1326px;top:487px;width:1px;height:38px;background:#e3e6e9;"></div>
<div style="position:absolute;left:1458px;top:487px;width:1px;height:38px;background:#e3e6e9;"></div>
<div style="position:absolute;left:1538px;top:487px;width:1px;height:38px;background:#e3e6e9;"></div>
<div style="position:absolute;left:1669px;top:487px;width:1px;height:38px;background:#e3e6e9;"></div>
<div style="position:absolute;left:1729px;top:487px;width:1px;height:38px;background:#e3e6e9;"></div>
<div style="position:absolute;left:735.3px;top:501.0px;width:8px;height:8px;border-radius:50%;background:#58ab1c;"></div>
<svg style="position:absolute;left:754px;top:500px;" width="18" height="10" viewBox="0 0 18 10" fill="none"><rect x="0" y="0" width="17" height="2" rx="1" fill="#1470b8"/><rect x="0" y="4" width="17" height="2" rx="1" fill="#1470b8"/><rect x="0" y="8" width="17" height="2" rx="1" fill="#1470b8"/></svg>
<div class="t" style="left:817.23px;top:498.30px;font-size:13.5px;line-height:14px;font-weight:400;color:#3a3a3a;letter-spacing:0.000px;-webkit-text-stroke:0.45px #3a3a3a;">3</div>
<div class="t" style="left:876.20px;top:498.30px;font-size:13.5px;line-height:14px;font-weight:400;color:#3f3f3f;letter-spacing:0.393px;">rule-icmp-allow</div>
<div class="t" style="left:1008.30px;top:498.30px;font-size:13.5px;line-height:14px;font-weight:400;color:#3f3f3f;letter-spacing:-0.583px;">7168</div>
<div class="t" style="left:1073.50px;top:498.30px;font-size:13.5px;line-height:14px;font-weight:400;color:#3f3f3f;letter-spacing:0.875px;">Any</div>
<div class="t" style="left:1205.20px;top:498.30px;font-size:13.5px;line-height:14px;font-weight:400;color:#3f3f3f;letter-spacing:1.025px;">Any</div>
<svg style="position:absolute;left:1339px;top:498.5px;" width="16" height="13" viewBox="0 0 16 13" fill="none"><path d="M3.6 0.8 H1 V11.8 H3.6 M12.4 0.8 H15 V11.8 H12.4" stroke="#333" stroke-width="1.1"/><path d="M5.4 0.8 L7.2 2 H8.8 L10.6 0.8 M5.4 11.8 L7.2 10.6 H8.8 L10.6 11.8 M3.6 3.2 L4.4 5 V7.6 L3.6 9.4 M12.4 3.2 L11.6 5 V7.6 L12.4 9.4" stroke="#444" stroke-width="1"/></svg>
<div class="t" style="left:1360.20px;top:498.30px;font-size:13.5px;line-height:14px;font-weight:400;color:#1676bf;letter-spacing:-0.107px;">ICMP ALL</div>
<div class="t" style="left:1469.30px;top:498.30px;font-size:13.5px;line-height:14px;font-weight:400;color:#3f3f3f;letter-spacing:0.675px;">Allow</div>
<div class="t" style="left:1549.00px;top:498.30px;font-size:13.5px;line-height:14px;font-weight:400;color:#3f3f3f;letter-spacing:0.500px;">All</div>
<div class="t" style="left:1679.80px;top:498.30px;font-size:13.5px;line-height:14px;font-weight:400;color:#3f3f3f;letter-spacing:1.150px;">No</div>
<svg style="position:absolute;left:1742px;top:498px;" width="16" height="14" viewBox="0 0 16 14" fill="none"><path d="M1.2 12.5 H15" stroke="#1a73ba" stroke-width="1.3" stroke-linecap="round"/><path d="M2.6 12.2 V6.7 H4.6 V12.2 M6.7 12.2 V3.8 H9.3 V12.2 M11.4 12.2 V1.8 H13.6 V12.2" stroke="#1a73ba" stroke-width="1.1"/></svg>
<div style="position:absolute;left:721px;top:526px;width:1054px;height:46px;background:#f3f3f3;"></div>
<div style="position:absolute;left:721px;top:572px;width:1054px;height:1px;background:#cfcfcf;"></div>
<svg style="position:absolute;left:735px;top:545.0px;" width="10" height="10" viewBox="0 0 10 10" fill="none"><rect x="0.5" y="0.5" width="8" height="8" stroke="#4a4a4a" stroke-width="1.1"/><path d="M2 4.5 H7 M4.5 2 V7" stroke="#333" stroke-width="1.1"/></svg>
<svg style="position:absolute;left:754px;top:544.0px;" width="18" height="10" viewBox="0 0 18 10" fill="none"><rect x="0" y="0" width="17" height="2" rx="1" fill="#1470b8"/><rect x="0" y="4" width="17" height="2" rx="1" fill="#1470b8"/><rect x="0" y="8" width="17" height="2" rx="1" fill="#1470b8"/></svg>
<svg style="position:absolute;left:812px;top:541px;" width="16" height="15" viewBox="0 0 16 15" fill="none"><circle cx="7.4" cy="7" r="6.8" stroke="#3a3a3a" stroke-width="1.05"/><path d="M2.9 6.5 H11.9 M3.3 8.6 H11.1" stroke="#333" stroke-width="1.1"/></svg>
<div class="t" style="left:876.52px;top:542.10px;font-size:13.5px;line-height:14px;font-weight:400;color:#444;letter-spacing:0.541px;-webkit-text-stroke:0.45px #444;">pol-allow-in</div>
<div class="t" style="left:1064.70px;top:542.10px;font-size:13.5px;line-height:14px;font-weight:400;color:#3f3f3f;letter-spacing:0.167px;">84d4934c-effb-452a-85e1-…</div>
<div class="t" style="left:1253.30px;top:542.10px;font-size:13.5px;line-height:14px;font-weight:400;color:#3f3f3f;letter-spacing:0.300px;">Stateful</div>
<div class="t" style="left:1728.50px;top:542.10px;font-size:13.5px;line-height:14px;font-weight:400;color:#3f3f3f;letter-spacing:-0.500px;">1 Rule</div>
<div style="position:absolute;left:721px;top:573px;width:1054px;height:46px;background:#f3f3f3;"></div>
<div style="position:absolute;left:721px;top:619px;width:1054px;height:1px;background:#cfcfcf;"></div>
<svg style="position:absolute;left:735px;top:592.0px;" width="10" height="10" viewBox="0 0 10 10" fill="none"><rect x="0.5" y="0.5" width="8" height="8" stroke="#4a4a4a" stroke-width="1.1"/><path d="M2 4.5 H7 M4.5 2 V7" stroke="#333" stroke-width="1.1"/></svg>
<svg style="position:absolute;left:754px;top:591.0px;" width="18" height="10" viewBox="0 0 18 10" fill="none"><rect x="0" y="0" width="17" height="2" rx="1" fill="#1470b8"/><rect x="0" y="4" width="17" height="2" rx="1" fill="#1470b8"/><rect x="0" y="8" width="17" height="2" rx="1" fill="#1470b8"/></svg>
<svg style="position:absolute;left:812px;top:588px;" width="16" height="15" viewBox="0 0 16 15" fill="none"><circle cx="7.4" cy="7" r="6.8" stroke="#3a3a3a" stroke-width="1.05"/><path d="M2.9 6.5 H11.9 M3.3 8.6 H11.1" stroke="#333" stroke-width="1.1"/></svg>
<div class="t" style="left:876.52px;top:589.10px;font-size:13.5px;line-height:14px;font-weight:400;color:#444;letter-spacing:0.658px;-webkit-text-stroke:0.45px #444;">pol-allow-out</div>
<div class="t" style="left:1064.70px;top:589.10px;font-size:13.5px;line-height:14px;font-weight:400;color:#3f3f3f;letter-spacing:0.268px;">906ca803-d017-4a79-bd4…</div>
<div class="t" style="left:1253.30px;top:589.10px;font-size:13.5px;line-height:14px;font-weight:400;color:#3f3f3f;letter-spacing:0.300px;">Stateful</div>
<div class="t" style="left:1719.60px;top:589.10px;font-size:13.5px;line-height:14px;font-weight:400;color:#3f3f3f;letter-spacing:-0.058px;">2 Rules</div>
<div style="position:absolute;left:721px;top:620px;width:1054px;height:46px;background:#f3f3f3;"></div>
<div style="position:absolute;left:721px;top:666px;width:1054px;height:1px;background:#cfcfcf;"></div>
<svg style="position:absolute;left:735px;top:639.0px;" width="10" height="10" viewBox="0 0 10 10" fill="none"><rect x="0.5" y="0.5" width="8" height="8" stroke="#4a4a4a" stroke-width="1.1"/><path d="M2 4.5 H7 M4.5 2 V7" stroke="#333" stroke-width="1.1"/></svg>
<svg style="position:absolute;left:754px;top:638.0px;" width="18" height="10" viewBox="0 0 18 10" fill="none"><rect x="0" y="0" width="17" height="2" rx="1" fill="#1470b8"/><rect x="0" y="4" width="17" height="2" rx="1" fill="#1470b8"/><rect x="0" y="8" width="17" height="2" rx="1" fill="#1470b8"/></svg>
<svg style="position:absolute;left:812px;top:635px;" width="16" height="15" viewBox="0 0 16 15" fill="none"><circle cx="7.4" cy="7" r="6.8" stroke="#3a3a3a" stroke-width="1.05"/><path d="M2.9 6.5 H11.9 M3.3 8.6 H11.1" stroke="#333" stroke-width="1.1"/></svg>
<div class="t" style="left:876.52px;top:636.10px;font-size:13.5px;line-height:14px;font-weight:400;color:#444;letter-spacing:0.559px;-webkit-text-stroke:0.45px #444;">pol-all-deny</div>
<div class="t" style="left:1064.70px;top:636.10px;font-size:13.5px;line-height:14px;font-weight:400;color:#3f3f3f;letter-spacing:0.105px;">b5e66630-c31d-441b-bc0…</div>
<div class="t" style="left:1253.30px;top:636.10px;font-size:13.5px;line-height:14px;font-weight:400;color:#3f3f3f;letter-spacing:0.300px;">Stateful</div>
<div class="t" style="left:1728.50px;top:636.10px;font-size:13.5px;line-height:14px;font-weight:400;color:#3f3f3f;letter-spacing:-0.500px;">1 Rule</div>
<div style="position:absolute;left:721px;top:667px;width:1054px;height:48px;background:#f3f3f3;"></div>
<div style="position:absolute;left:721px;top:715px;width:1054px;height:1px;background:#cfcfcf;"></div>
<svg style="position:absolute;left:735px;top:686.0px;" width="10" height="10" viewBox="0 0 10 10" fill="none"><rect x="0.5" y="0.5" width="8" height="8" stroke="#4a4a4a" stroke-width="1.1"/><path d="M2 4.5 H7 M4.5 2 V7" stroke="#333" stroke-width="1.1"/></svg>
<svg style="position:absolute;left:754px;top:687.0px;" width="18" height="10" viewBox="0 0 18 10" fill="none"><rect x="0" y="0" width="17" height="2" rx="1" fill="#1470b8"/><rect x="0" y="4" width="17" height="2" rx="1" fill="#1470b8"/><rect x="0" y="8" width="17" height="2" rx="1" fill="#1470b8"/></svg>
<svg style="position:absolute;left:812px;top:684px;" width="16" height="15" viewBox="0 0 16 15" fill="none"><circle cx="7.4" cy="7" r="6.8" stroke="#3a3a3a" stroke-width="1.05"/><path d="M2.9 6.5 H11.9 M3.3 8.6 H11.1" stroke="#333" stroke-width="1.1"/></svg>
<svg style="position:absolute;left:834.5px;top:683.5px;" width="16" height="15" viewBox="0 0 16 15" fill="none"><path d="M7.5 1 L14.4 4.7 L7.5 8.4 L0.6 4.7 Z" stroke="#333" stroke-width="1.1" stroke-linejoin="round"/><path d="M1.2 7 L7.5 10.3 L13.8 7" stroke="#444" stroke-width="1"/><path d="M0.3 9.6 L7.5 12.6 L14.7 9.6 L14.7 11 L7.5 14.6 L0.3 11 Z" fill="#333" stroke="#333" stroke-width="0.8" stroke-linejoin="round"/></svg>
<div class="t" style="left:876.52px;top:682.90px;font-size:13.5px;line-height:14px;font-weight:400;color:#444;letter-spacing:0.348px;-webkit-text-stroke:0.45px #444;">Default LR Layer3 Section</div>
<div class="t" style="left:1064.70px;top:682.90px;font-size:13.5px;line-height:14px;font-weight:400;color:#3f3f3f;letter-spacing:0.318px;">459692d5-fdea-4d9b-883…</div>
<div class="t" style="left:1253.30px;top:682.90px;font-size:13.5px;line-height:14px;font-weight:400;color:#3f3f3f;letter-spacing:0.300px;">Stateful</div>
<div class="t" style="left:1728.50px;top:682.90px;font-size:13.5px;line-height:14px;font-weight:400;color:#3f3f3f;letter-spacing:-0.500px;">1 Rule</div>
</body></html>
